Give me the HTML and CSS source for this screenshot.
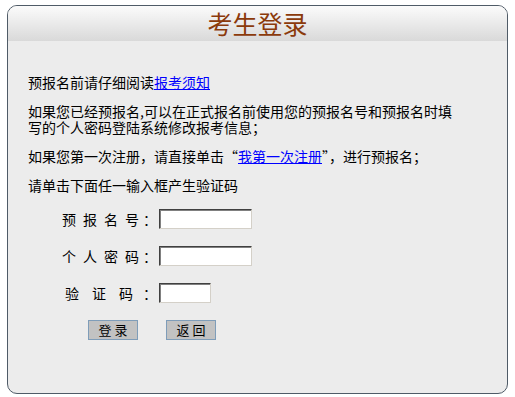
FILE: index.html
```html
<!DOCTYPE html>
<html lang="zh-CN">
<head>
    <meta charset="UTF-8">
    <meta name="viewport" content="width=device-width, initial-scale=1.0">
    <title>考生登录</title>
    <link rel="stylesheet" href="styles.css">
</head>
<body>
    <div class="panel">
        <div class="panel-head">考生登录</div>

        <div class="panel-body">
            <div class="notice">
                <p>预报名前请仔细阅读<a href="#">报考须知</a></p>
                <p>如果您已经预报名,可以在正式报名前使用您的预报名号和预报名时填写的个人密码登陆系统修改报考信息；</p>
                <p>如果您第一次注册，请直接单击“<a href="#">我第一次注册</a>”，进行预报名；</p>
                <p>请单击下面任一输入框产生验证码</p>
            </div>

            <form class="login-form" onsubmit="return false;">
                <div class="field">
                    <label class="field-name" for="bmh">预 报 名 号</label><span class="colon">：</span>
                    <input type="text" id="bmh" class="input-long">
                </div>
                <div class="field">
                    <label class="field-name" for="mm">个 人 密 码</label><span class="colon">：</span>
                    <input type="password" id="mm" class="input-long">
                </div>
                <div class="field">
                    <label class="field-name short" for="yzm">验 证 码</label><span class="colon">：</span>
                    <input type="text" id="yzm" class="input-short">
                </div>
                <div class="actions">
                    <button type="submit">登录</button>
                    <button type="button">返回</button>
                </div>
            </form>
        </div>
    </div>
</body>
</html>
```

FILE: styles.css
```css
body {
    font-family: "Noto Sans CJK SC", "Liberation Sans", sans-serif;
    font-size: 14px;
    margin: 0;
    padding: 5px 7px;
    background-color: #fff;
    color: #000;
}

.panel {
    border: 1px solid #4f5b67;
    border-radius: 10px;
    background-color: #ececec;
    overflow: hidden;
}

.panel-head {
    height: 35px;
    line-height: 35px;
    text-align: center;
    font-size: 25px;
    color: #8b3a0b;
    background: linear-gradient(#fbfbfb, #d9d9d9);
}

.panel-body {
    padding: 33px 48px 53px 20px;
}

.notice p {
    margin: 0 0 13px;
    line-height: 16px;
}

.notice a {
    color: #0000ff;
    text-decoration: underline;
}

.login-form {
    padding-top: 3px;
}

.field {
    display: flex;
    align-items: center;
    height: 20px;
    margin: 0 0 17px 34px;
}

.field-name {
    display: inline-block;
    width: 77px;
    text-align: justify;
    text-align-last: justify;
}

.field-name.short {
    width: 68px;
    margin-left: 3px;
    margin-right: 6px;
}

.colon {
    width: 10px;
    padding-left: 4px;
}

.field input {
    box-sizing: border-box;
    height: 20px;
    margin: 0 0 0 6px;
    padding: 0 2px;
    background: #fff;
    border: 1px solid;
    border-color: #404040 #d4d0c8 #d4d0c8 #404040;
    box-shadow: inset 1px 1px 0 #808080;
    font: inherit;
}

.input-long {
    width: 93px;
}

.input-short {
    width: 52px;
}

.actions {
    display: flex;
    gap: 28px;
    margin: 17px 0 0 60px;
}

.actions button {
    width: 50px;
    height: 20px;
    padding: 0 0 0 3px;
    background-color: #c2c2c2;
    border: 1px solid #7f9db9;
    font-family: inherit;
    font-size: 13px;
    line-height: 16px;
    letter-spacing: 3px;
    color: #000;
}
```
